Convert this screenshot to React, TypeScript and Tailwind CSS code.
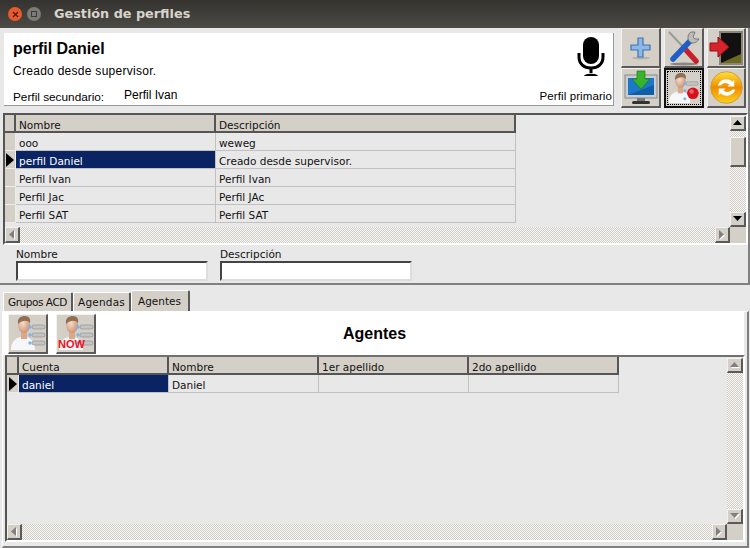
const checker =
  "bg-[repeating-conic-gradient(#d0cdc6_0_25%,#f8f8f8_0_50%)] bg-[length:2px_2px]";
const bevel =
  "bg-[#d4d0c8] border-t border-l border-r-2 border-b-2 border-t-[#f4f2ee] border-l-[#f4f2ee] border-r-[#5a5a5a] border-b-[#5a5a5a]";
const tableFont = "font-['DejaVu_Sans',sans-serif] text-[10.5px]";

function Person({ variant }: { variant: "list" | "rec" | "now" }) {
  return (
    <svg width="36" height="36" viewBox="0 0 36 36">
      <defs>
        <radialGradient id="skin" cx="0.4" cy="0.4" r="0.7">
          <stop offset="0" stopColor="#f8dcc6" />
          <stop offset="1" stopColor="#c48c6c" />
        </radialGradient>
      </defs>
      <path d="M1 35c0-8 4-12 10-13h5c5 1 9 5 9 13z" fill="#f5f7fb" />
      <rect x="11" y="16" width="6" height="8" fill="#dca888" />
      <ellipse cx="14" cy="10" rx="6" ry="8" fill="url(#skin)" />
      <path d="M8 9c-1-6 3-8 7-8s6 3 5 7c-2-3-8-3-12 1z" fill="#8f7056" />
      {variant === "rec" ? (
        <>
          <rect x="20" y="11" width="14" height="4" rx="2" fill="#c4c4c4" stroke="#8a8a8a" strokeWidth=".6" />
          <circle cx="19" cy="13" r="1.7" fill="#7fb0ee" />
          <circle cx="19" cy="21" r="1.7" fill="#7fb0ee" />
          <circle cx="19" cy="30" r="1.7" fill="#7fb0ee" />
          <circle cx="28" cy="24" r="6.5" fill="#d8101c" />
          <circle cx="26.5" cy="22" r="2.5" fill="#f0606a" />
        </>
      ) : (
        [12, 20, 28].map((y) => (
          <g key={y}>
            <rect x="22" y={y - 2} width="13" height="4" rx="2" fill="#c4c4c4" stroke="#8a8a8a" strokeWidth=".6" />
            <circle cx="20" cy={y} r="1.7" fill="#7fb0ee" />
          </g>
        ))
      )}
      {variant === "now" && (
        <text x="0" y="33" fontFamily="Liberation Sans" fontWeight="bold" fontSize="11" fill="#f01020">
          NOW
        </text>
      )}
    </svg>
  );
}

function IconButton({
  children,
  focused,
  className = "",
}: {
  children: React.ReactNode;
  focused?: boolean;
  className?: string;
}) {
  if (focused) {
    return (
      <div className={`bg-[#d4d0c8] border-2 border-[#111] p-[1px] ${className}`}>
        <div className="w-full h-full flex items-center justify-center border border-dotted border-black">
          {children}
        </div>
      </div>
    );
  }
  return <div className={`flex items-center justify-center ${bevel} ${className}`}>{children}</div>;
}

function Arrow({ dir, muted }: { dir: "up" | "down" | "left" | "right"; muted?: boolean }) {
  const points = {
    up: "0,5 9,5 4.5,0",
    down: "0,0 9,0 4.5,5",
    left: "5,0 5,9 0,4.5",
    right: "0,0 0,9 5,4.5",
  }[dir];
  const vertical = dir === "up" || dir === "down";
  return (
    <svg width={vertical ? 10 : 6} height={vertical ? 6 : 10} viewBox={vertical ? "0 0 10 6" : "0 0 6 10"}>
      {muted && <polygon points={points} fill="#fff" transform="translate(1 1)" />}
      <polygon points={points} fill={muted ? "#808080" : "#000"} />
    </svg>
  );
}

function ScrollButton({ dir, muted }: { dir: "up" | "down" | "left" | "right"; muted?: boolean }) {
  const size = dir === "up" || dir === "down" ? "w-[16px] h-[15px]" : "w-[15px] h-[16px]";
  return (
    <div className={`${size} shrink-0 flex items-center justify-center ${bevel}`}>
      <Arrow dir={dir} muted={muted} />
    </div>
  );
}

function HeaderCell({ label, width }: { label: string; width: string }) {
  return (
    <div className={`${width} h-[18px] shrink-0 bg-[#d4d0c8] border-r-2 border-b-2 border-[#555] pl-[3px] leading-[20px] text-[#111]`}>
      {label}
    </div>
  );
}

function Cell({ label, width, selected }: { label?: string; width: string; selected?: boolean }) {
  return (
    <div
      className={`${width} h-[18px] shrink-0 border-r border-b border-[#c0c0c0] pl-[3px] leading-[20px] whitespace-nowrap ${
        selected ? "bg-[#0a2463] text-white" : "text-[#111]"
      }`}
    >
      {label}
    </div>
  );
}

function Indicator({ width, active }: { width: string; active?: boolean }) {
  return (
    <div className={`${width} h-[18px] shrink-0 bg-[#d4d0c8] border-r border-b border-[#ececec] flex items-center justify-center`}>
      {active && (
        <svg width="8" height="14" viewBox="0 0 8 14">
          <polygon points="0,0 8,7 0,14" fill="#000" />
        </svg>
      )}
    </div>
  );
}

function VerticalBar({ thumb, muted }: { thumb?: boolean; muted?: boolean }) {
  return (
    <div className={`w-[16px] shrink-0 flex flex-col ${checker}`}>
      <div className="h-[1px] bg-[#e8e8e8]" />
      <ScrollButton dir="up" muted={muted} />
      {thumb && <div className={`mt-[6px] h-[30px] ${bevel}`} />}
      <div className="flex-1" />
      <ScrollButton dir="down" muted={muted} />
    </div>
  );
}

function HorizontalBar() {
  return (
    <div className="h-[16px] shrink-0 flex">
      <div className={`flex-1 flex ${checker}`}>
        <ScrollButton dir="left" muted />
        <div className="flex-1" />
        <ScrollButton dir="right" muted />
      </div>
      <div className="w-[16px] bg-[#d4d0c8]" />
    </div>
  );
}

function Field({ label }: { label: string }) {
  return (
    <div className="w-[192px] font-['DejaVu_Sans',sans-serif] text-[10.5px] text-[#111]">
      <div className="leading-[13px] h-[13px]">{label}</div>
      <div className="h-[20px] bg-white border-2 border-t-[#444] border-l-[#444] border-r-[#ddd] border-b-[#ddd]" />
    </div>
  );
}

function Tab({ label, className, active }: { label: string; className: string; active?: boolean }) {
  return (
    <div
      className={`${className} bg-[#d4d0c8] border-t border-l border-r-2 border-t-white border-l-white border-r-[#5a5a5a] rounded-t-[2px] whitespace-nowrap font-['DejaVu_Sans',sans-serif] text-[10.5px] text-[#111] ${
        active ? "h-[21px] pl-[6px] leading-[20px]" : "h-[19px] pl-[4px] leading-[18px]"
      }`}
    >
      {label}
    </div>
  );
}

const profiles = [
  ["ooo", "weweg"],
  ["perfil Daniel", "Creado desde supervisor."],
  ["Perfil Ivan", "Perfil Ivan"],
  ["Perfil Jac", "Perfil JAc"],
  ["Perfil SAT", "Perfil SAT"],
];

export default function App() {
  return (
    <div className="w-[750px] h-[548px] overflow-hidden flex flex-col bg-[#e8e8e8]">
      <div className="h-[28px] shrink-0 flex items-center bg-gradient-to-b from-[#34332f] to-[#4c4a44] pl-[8px]">
        <div className="w-[14px] h-[14px] rounded-full bg-[#e9592b] flex items-center justify-center">
          <svg width="7" height="7" viewBox="0 0 7 7">
            <path d="M1 1l5 5M6 1l-5 5" stroke="#4a1c0c" strokeWidth="1.3" />
          </svg>
        </div>
        <div className="ml-[5px] w-[14px] h-[14px] rounded-full bg-[#7c7b75] flex items-center justify-center">
          <div className="w-[6px] h-[6px] border border-[#3c3b37]" />
        </div>
        <div className="ml-[13px] font-['DejaVu_Sans',sans-serif] font-bold text-[12.8px] text-[#d8d4cc]">
          Gestión de perfiles
        </div>
      </div>

      {/* upper part: profile summary and list */}
      <div className="h-[257px] shrink-0 flex flex-col border-r-2 border-b-2 border-[#808080]">
        <div className="h-[85px] shrink-0 flex pl-[4px] pt-[5px]">
          <div className="w-[610px] h-[73px] shrink-0 bg-white border-b border-r border-[#999] flex pl-[9px] pr-[1px] font-['Liberation_Sans',sans-serif] text-black">
            <div className="flex-1 flex flex-col">
              <div className="text-[16px] font-bold leading-[18px] mt-[7px]">perfil Daniel</div>
              <div className="text-[12px] leading-[14px] mt-[6px] tracking-[0.28px]">Creado desde supervisor.</div>
              <div className="mt-[10px] flex text-[11.8px] leading-[14px]">
                <span className="w-[111px] pt-[2px]">Perfil secundario:</span>
                <span className="text-[12px]">Perfil Ivan</span>
              </div>
            </div>
            <div className="flex flex-col items-end">
              <div className="mt-[4px] pr-[7px]">
                <svg width="28" height="40" viewBox="3 0 28 40">
                  <rect x="9" y="0" width="16" height="27" rx="8" fill="#000" />
                  <path d="M5 16v4c0 7 5 11 12 11s12-4 12-11v-4" fill="none" stroke="#000" strokeWidth="3" />
                  <path d="M17 31v5" stroke="#000" strokeWidth="3" />
                  <path d="M10 39c1-3 13-3 14 0z" fill="#000" />
                </svg>
              </div>
              <span className="mt-[12px] text-[11.5px] leading-[14px] tracking-[0.1px]">Perfil primario</span>
            </div>
          </div>
          <div className="ml-[7px] -mt-[5px] grid grid-cols-[40px_40px_39px] grid-rows-[40px_40px] gap-x-[3px] h-[80px]">
            <IconButton>
              <svg width="24" height="24" viewBox="0 0 24 24">
                <ellipse cx="12" cy="22" rx="9" ry="1.5" fill="#b5b1a9" />
                <path d="M9 2h5v7h7v5h-7v7H9v-7H2V9h7z" fill="#8db7e6" stroke="#3f74b5" strokeWidth="1.2" />
              </svg>
            </IconButton>
            <IconButton>
              <svg width="36" height="36" viewBox="0 0 36 36">
                <ellipse cx="18" cy="34" rx="14" ry="1.5" fill="#8a867e" />
                <path d="M3 2l18 19" stroke="#9a9a9a" strokeWidth="2" />
                <path d="M20 20l10 11" stroke="#c8202a" strokeWidth="5.5" strokeLinecap="round" />
                <path d="M25 10L7 29" stroke="#1f5fc8" strokeWidth="5.5" strokeLinecap="round" />
                <path d="M25 2c-3 2-4 6-2 9s7 3 10-2l-4 0-2-2 2-5z" fill="#bcbcbc" stroke="#666" strokeWidth=".8" />
              </svg>
            </IconButton>
            <IconButton>
              <svg width="35" height="36" viewBox="0 0 35 36">
                <rect x="10" y="1" width="24" height="34" fill="#8a8578" />
                <rect x="12" y="3" width="20" height="30" fill="#111" />
                <path d="M12 33l20-9v9z" fill="#6d6a20" />
                <path d="M1 13h8V7l11 10-11 10v-6H1z" fill="#d8232a" stroke="#8c1218" strokeWidth="1" />
              </svg>
            </IconButton>
            <IconButton>
              <svg width="36" height="36" viewBox="0 0 36 36">
                <rect x="2" y="5" width="32" height="23" fill="#c9cdd2" stroke="#888" />
                <rect x="5" y="8" width="26" height="17" fill="#1e78c8" />
                <path d="M5 25l26-10v10z" fill="#0f5ea8" />
                <rect x="14" y="28" width="8" height="3" fill="#777" />
                <rect x="9" y="31" width="18" height="3" rx="1.5" fill="#333" />
                <path d="M14 1h8v8h5l-9 10-9-10h5z" fill="#36b52c" stroke="#1c7a18" strokeWidth=".7" />
              </svg>
            </IconButton>
            <IconButton focused>
              <Person variant="rec" />
            </IconButton>
            <IconButton>
              <svg width="33" height="33" viewBox="0 0 34 34">
                <defs>
                  <linearGradient id="gold" x1="0" y1="0" x2="0" y2="1">
                    <stop offset="0" stopColor="#ffe23a" />
                    <stop offset="0.5" stopColor="#f08c00" />
                    <stop offset="1" stopColor="#ffd21a" />
                  </linearGradient>
                </defs>
                <circle cx="17" cy="17" r="16.3" fill="url(#gold)" stroke="#c8a040" />
                <path d="M8 15a9 9 0 0 1 15-4l2-2v7h-7l2-2a6 6 0 0 0-9 1z" fill="#fff" />
                <path d="M26 19a9 9 0 0 1-15 4l-2 2v-7h7l-2 2a6 6 0 0 0 9-1z" fill="#fff" />
              </svg>
            </IconButton>
          </div>
        </div>

        <div className={`ml-[3px] h-[132px] shrink-0 border-2 border-t-[#555] border-l-[#555] border-r-white border-b-white flex flex-col ${tableFont}`}>
          <div className="flex-1 min-h-0 flex">
            <div className="flex-1 min-w-0">
              <div className="flex">
                <div className="w-[11px] h-[18px] bg-[#d4d0c8] border-r-2 border-b-2 border-[#555]" />
                <HeaderCell label="Nombre" width="w-[200px]" />
                <HeaderCell label="Descripción" width="w-[300px]" />
              </div>
              {profiles.map(([name, desc], i) => (
                <div key={name} className="flex">
                  <Indicator width="w-[11px]" active={i === 1} />
                  <Cell label={name} width="w-[200px]" selected={i === 1} />
                  <Cell label={desc} width="w-[300px]" />
                </div>
              ))}
            </div>
            <VerticalBar thumb />
          </div>
          <HorizontalBar />
        </div>

        <div className="flex-1 flex gap-[12px] pl-[16px] pt-[3px]">
          <Field label="Nombre" />
          <Field label="Descripción" />
        </div>
      </div>

      {/* lower part: tabs with the agents of the profile */}
      <div className="flex-1 min-h-0 flex flex-col pt-[5px]">
        <div className="h-[21px] shrink-0 flex items-end pl-[3px]">
          <Tab label="Grupos ACD" className="w-[70px] tracking-[-0.45px]" />
          <Tab label="Agendas" className="w-[58px] tracking-[0.2px]" />
          <Tab label="Agentes" className="w-[59px]" active />
        </div>
        <div className="flex-1 min-h-0 ml-[2px] mr-[1px] flex flex-col border-t border-l border-r-2 border-b-2 border-t-white border-l-white border-r-[#808080] border-b-[#808080]">
          <div className="h-[43px] shrink-0 mr-[3px] bg-white flex items-center pl-[5px]">
            <IconButton className="w-[40px] h-[40px]">
              <Person variant="list" />
            </IconButton>
            <IconButton className="ml-[8px] w-[40px] h-[40px]">
              <Person variant="now" />
            </IconButton>
            <div className="flex-1 text-center pr-[91px] font-['Liberation_Sans',sans-serif] font-bold text-[16px] text-black">
              Agentes
            </div>
          </div>
          <div className={`ml-[2px] mr-[2px] h-[187px] shrink-0 border-2 border-t-[#707070] border-l-[#555] border-r-white border-b-white flex flex-col ${tableFont}`}>
            <div className="flex-1 min-h-0 flex">
              <div className="flex-1 min-w-0">
                <div className="flex">
                  <div className="w-[12px] h-[18px] bg-[#d4d0c8] border-r-2 border-b-2 border-[#555]" />
                  <HeaderCell label="Cuenta" width="w-[150px]" />
                  <HeaderCell label="Nombre" width="w-[150px]" />
                  <HeaderCell label="1er apellido" width="w-[150px]" />
                  <HeaderCell label="2do apellido" width="w-[150px]" />
                </div>
                <div className="flex">
                  <Indicator width="w-[12px]" active />
                  <Cell label="daniel" width="w-[150px]" selected />
                  <Cell label="Daniel" width="w-[150px]" />
                  <Cell width="w-[150px]" />
                  <Cell width="w-[150px]" />
                </div>
              </div>
              <VerticalBar muted />
            </div>
            <HorizontalBar />
          </div>
        </div>
      </div>
    </div>
  );
}
